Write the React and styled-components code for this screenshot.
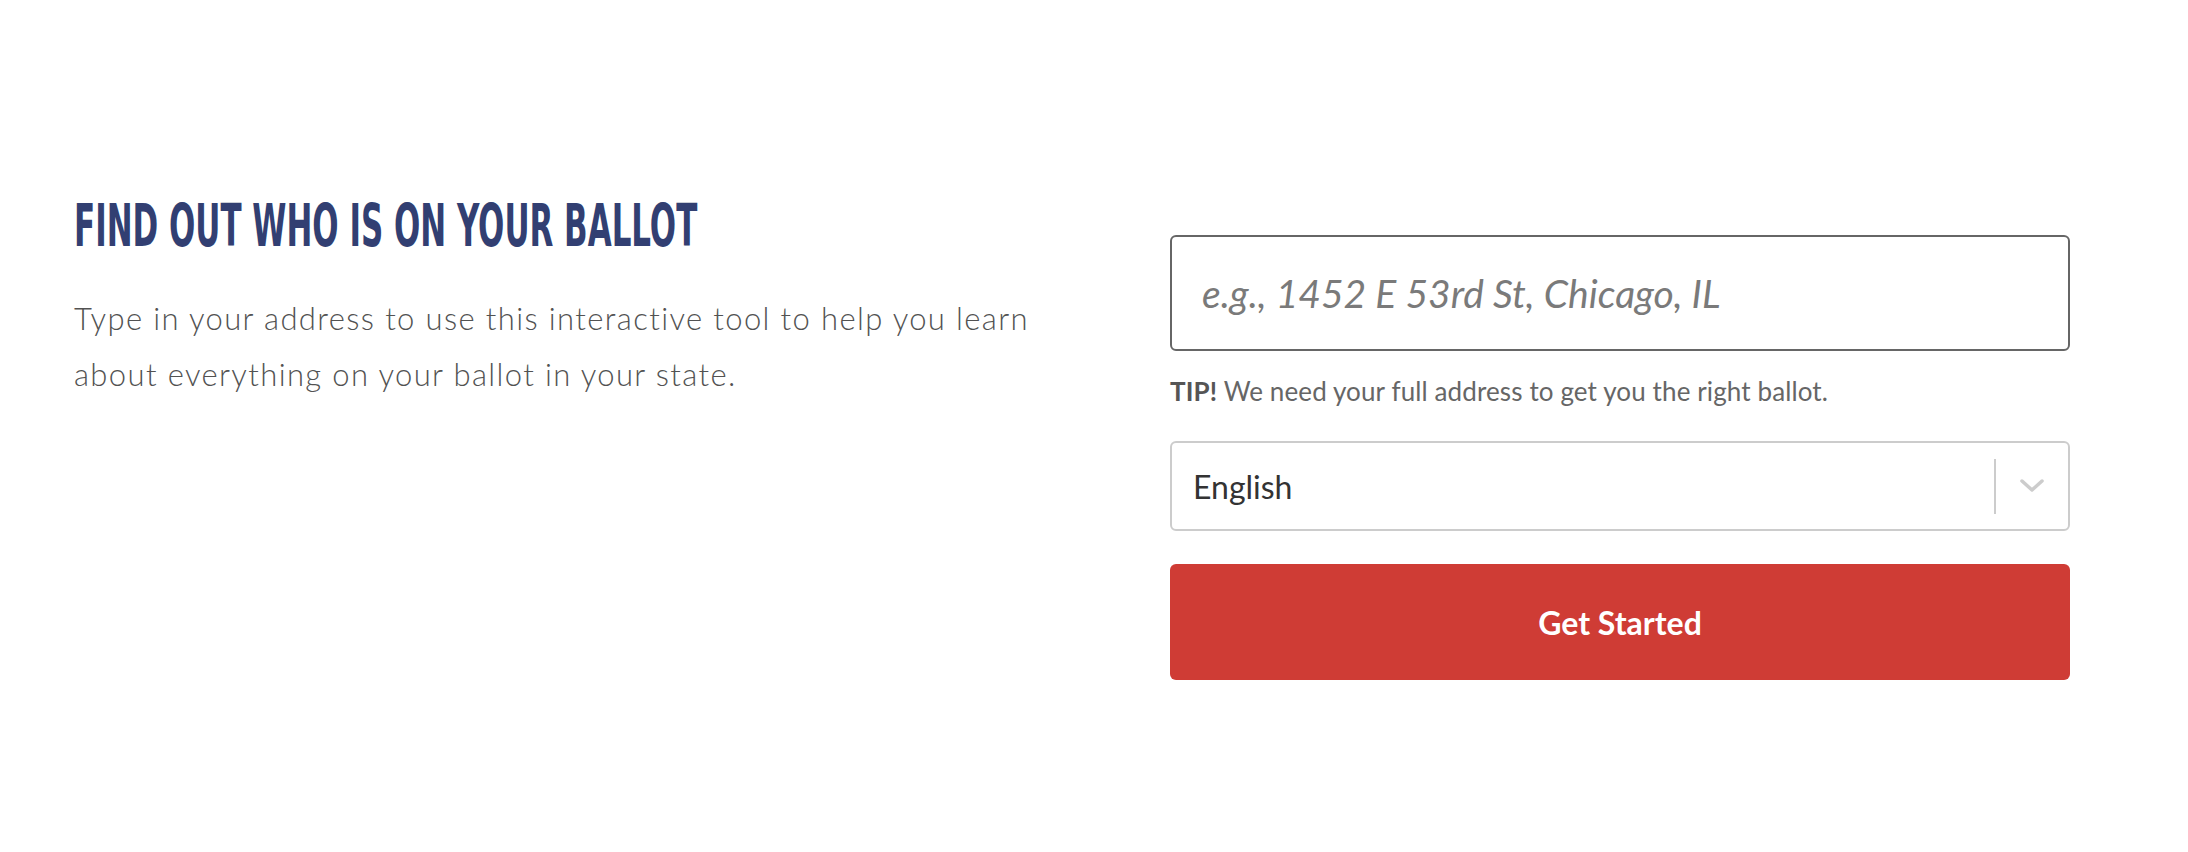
import React from 'react'
import styled, { createGlobalStyle } from 'styled-components'

const GlobalStyle = createGlobalStyle`
  html, body {
    margin: 0;
    padding: 0;
    background: #ffffff;
  }
  body {
    font-family: "Lato", "Liberation Sans", sans-serif;
  }
`

const Section = styled.section`
  display: flex;
  justify-content: space-between;
  align-items: flex-start;
  padding: 0 118px 0 74px;
  height: 852px;
  box-sizing: border-box;
`

const Intro = styled.div`
  padding-top: 193px;
  width: 1000px;
`

const Heading = styled.h2`
  margin: 0;
  font-family: "DejaVu Sans Condensed", "DejaVu Sans", sans-serif;
  font-weight: 700;
  font-size: 58px;
  line-height: 1.164;
  color: #323f72;
  white-space: nowrap;
  display: inline-block;
  transform: scaleX(0.593);
  transform-origin: left center;
`

const Lead = styled.p`
  margin: 29px 0 0;
  font-family: "Lato", sans-serif;
  font-weight: 300;
  font-size: 31px;
  line-height: 56px;
  letter-spacing: 1.37px;
  color: #525252;
  max-width: 1000px;
`

const Form = styled.form`
  display: flex;
  flex-direction: column;
  width: 900px;
  padding-top: 235px;
`

const AddressInput = styled.input`
  box-sizing: border-box;
  width: 100%;
  height: 116px;
  padding: 0 30px;
  border: 2px solid #666666;
  border-radius: 6px;
  font-family: "Lato", sans-serif;
  font-size: 39px;
  color: #333;
  outline: none;

  &::placeholder {
    color: #7a7a7a;
    font-style: italic;
  }
`

const Tip = styled.p`
  margin: 24px 0 0;
  font-family: "Lato", sans-serif;
  font-size: 26px;
  line-height: 32px;
  letter-spacing: 0.12px;
  color: #666666;

  strong {
    font-weight: 700;
    color: #555555;
  }
`

const SelectBox = styled.div`
  box-sizing: border-box;
  display: flex;
  align-items: center;
  height: 90px;
  margin-top: 34px;
  border: 2px solid #cccccc;
  border-radius: 6px;
`

const SelectValue = styled.span`
  flex: 1;
  padding-left: 21px;
  font-family: "Lato", sans-serif;
  font-size: 32px;
  color: #333333;
`

const Indicator = styled.div`
  display: flex;
  align-items: center;
  justify-content: center;
  width: 72px;
  height: 55px;
  border-left: 2px solid #cccccc;
`

const SubmitButton = styled.button`
  box-sizing: border-box;
  height: 116px;
  margin-top: 33px;
  border: none;
  border-radius: 6px;
  background: #cf3c35;
  color: #ffffff;
  font-family: "Lato", sans-serif;
  font-weight: 700;
  font-size: 32px;
  cursor: pointer;
`

function Chevron() {
  return (
    <svg width="24" height="14" viewBox="0 0 24 14">
      <polyline points="2,2 12,11 22,2" fill="none" stroke="#cccccc" strokeWidth="3.5" strokeLinecap="round" strokeLinejoin="round" />
    </svg>
  )
}

export default function App() {
  return (
    <>
      <GlobalStyle />
      <Section>
        <Intro>
          <Heading>FIND OUT WHO IS ON YOUR BALLOT</Heading>
          <Lead>
            Type in your address to use this interactive tool to help you learn about everything on your ballot in your state.
          </Lead>
        </Intro>
        <Form onSubmit={e => e.preventDefault()}>
          <AddressInput type="text" placeholder="e.g., 1452 E 53rd St, Chicago, IL" />
          <Tip><strong>TIP!</strong> We need your full address to get you the right ballot.</Tip>
          <SelectBox>
            <SelectValue>English</SelectValue>
            <Indicator><Chevron /></Indicator>
          </SelectBox>
          <SubmitButton type="submit">Get Started</SubmitButton>
        </Form>
      </Section>
    </>
  )
}
